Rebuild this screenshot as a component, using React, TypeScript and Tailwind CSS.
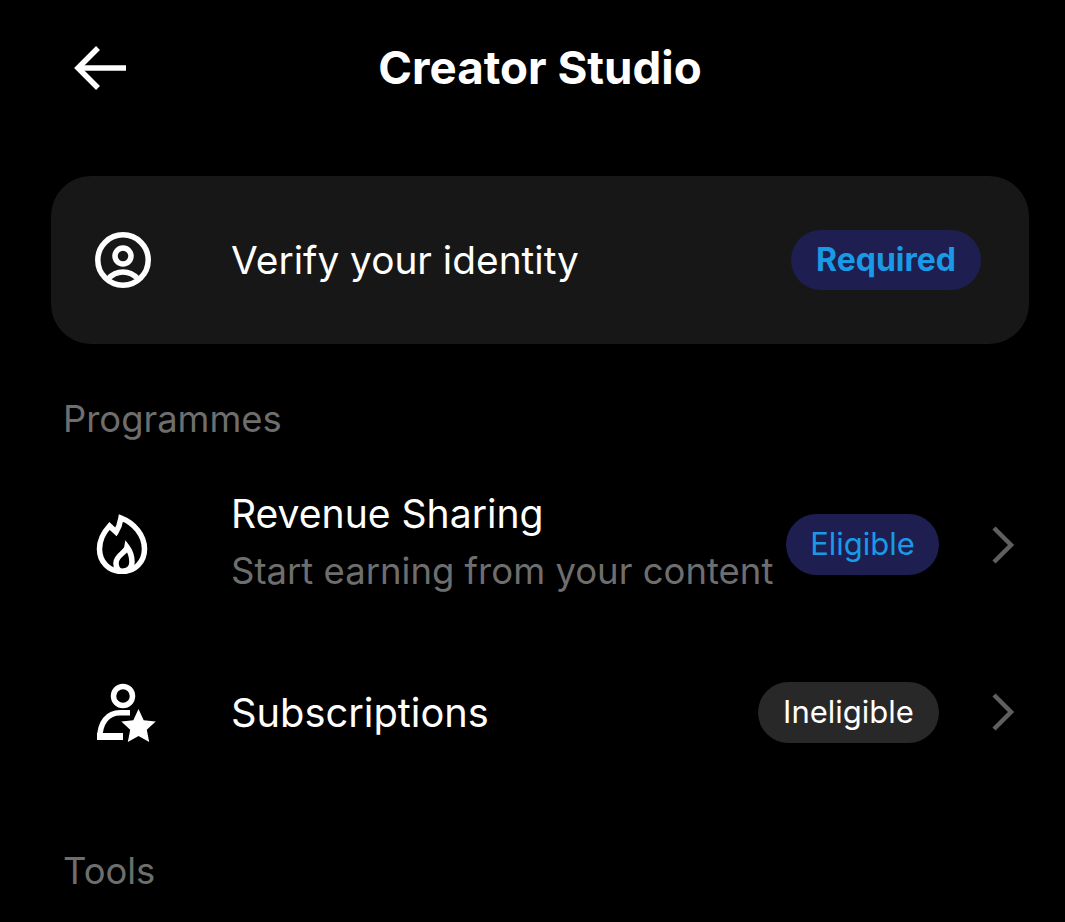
function BackIcon() {
	return (
		<svg viewBox="0 0 52 44" className="h-[44px] w-[52px]" fill="none" stroke="white" strokeWidth="5.5">
			<path d="M52 22H4" />
			<path d="M24 2 4 22l20 20" />
		</svg>
	);
}

function IdentityIcon() {
	return (
		<svg viewBox="0 0 56 56" className="h-14 w-14" fill="none" stroke="white" strokeWidth="5.5">
			<circle cx="28" cy="28" r="25.2" />
			<circle cx="28" cy="24" r="8" />
			<path d="M13 47C17 42.500 22 40 28 40S39 42.500 43 47" />
		</svg>
	);
}

function FlameIcon() {
	return (
		<svg
			viewBox="0 0 52 62"
			className="h-[62px] w-[52px] -translate-y-[2px]"
			fill="none"
			stroke="white"
			strokeWidth="5.5"
			strokeMiterlimit="10"
		>
			<path d="M25 6C24 12 22.500 16 20 20L13.500 14C7 21 3.500 29 3.500 37C3.500 50 13 59.500 26 59.500S48.500 50 48.500 37C48.500 23 38 11 25 6Z" />
			<path d="M31 35C30 41 20 43 20 51C20 56 22 59 26 59.500C32 59 36 56 36 50C36 44 34 39 31 35Z" />
		</svg>
	);
}

function SubscriptionIcon() {
	return (
		<svg viewBox="0 0 60 64" className="h-16 w-[60px]">
			<circle cx="27" cy="16" r="9.500" fill="none" stroke="white" strokeWidth="5.500" />
			<path d="M3.700 59C3.700 42 12 32.800 24 32.800H34" fill="none" stroke="white" strokeWidth="5.500" />
			<path d="M1 53h26v7H1Z" fill="white" />
			<path d="M42.500 29l5.200 11.300 12 1.300-8.900 8.200 2.400 12.200-10.700-6-10.700 6 2.400-12.200-8.900-8.200 12-1.300Z" fill="white" />
		</svg>
	);
}

function Chevron() {
	return (
		<svg viewBox="0 0 24 38" className="h-[38px] w-6 shrink-0" fill="none" stroke="#5f5f5f" strokeWidth="4.500">
			<path d="M3 2l17 17L3 36" />
		</svg>
	);
}

export default function App() {
	return (
		<div className="h-[922px] overflow-hidden bg-black font-['Inter',sans-serif] text-white">
			<header className="relative flex h-[136px] w-[1080px] items-center justify-center">
				<div className="absolute left-[74px] top-[46px]">
					<BackIcon />
				</div>
				<h1 className="text-[45.700px] font-bold">Creator Studio</h1>
			</header>

			<div className="ml-[51px] mr-[36px] mt-10 flex h-[168px] items-center rounded-[40px] bg-[#171717] pl-[44px] pr-[48px]">
				<IdentityIcon />
				<span className="ml-[80px] text-[38.800px]">Verify your identity</span>
				<span className="ml-auto flex h-[60px] w-[190px] items-center justify-center rounded-full bg-[#1e1e50] text-[32px] font-bold text-[#1a9ae6]">
					Required
				</span>
			</div>

			<h2 className="ml-[63px] mt-[54px] text-[36.400px] leading-[42px] text-[#6e6e6e]">Programmes</h2>

			<div className="mt-[45px] flex h-[120px] items-center pl-[96px] pr-[50px]">
				<FlameIcon />
				<div className="ml-[83px] flex-1 -translate-y-[3px]">
					<div className="text-[39.100px] leading-[44px]">Revenue Sharing</div>
					<div className="mt-[14px] whitespace-nowrap text-[36.500px] leading-[42px] text-[#6e6e6e]">
						Start earning from your content
					</div>
				</div>
				<span className="flex h-[61px] w-[153px] -translate-y-px items-center justify-center rounded-full bg-[#1e1e50] text-[31px] text-[#1a9ae6]">
					Eligible
				</span>
				<div className="ml-[52px]">
					<Chevron />
				</div>
			</div>

			<div className="mt-[77px] flex h-[60px] items-center pl-[96px] pr-[50px]">
				<SubscriptionIcon />
				<span className="ml-[75px] flex-1 pt-0.5 text-[39.800px]">Subscriptions</span>
				<span className="flex h-[61px] w-[181px] items-center justify-center rounded-full bg-[#282828] text-[31px]">
					Ineligible
				</span>
				<div className="ml-[52px]">
					<Chevron />
				</div>
			</div>

			<h2 className="ml-[63px] mt-[108px] text-[36.400px] leading-[42px] text-[#6e6e6e]">Tools</h2>
		</div>
	);
}
